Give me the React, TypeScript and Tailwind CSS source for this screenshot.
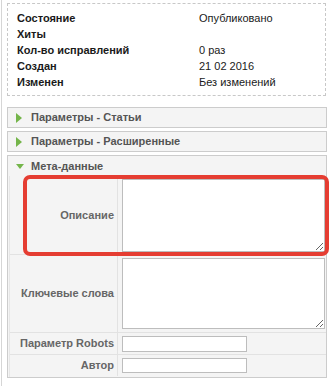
const info: [string, string][] = [
  ["Состояние", "Опубликовано"],
  ["Хиты", ""],
  ["Кол-во исправлений", "0 раз"],
  ["Создан", "21 02 2016"],
  ["Изменен", "Без изменений"],
]

function Closed({ title }: { title: string }) {
  return (
    <div className="flex h-[21px] w-[320px] items-center border border-[#cccccc] bg-[#f4f4f4] pl-[8px]">
      <span className="h-0 w-0 border-y-[5px] border-l-[6px] border-y-transparent border-l-[#74b54a]" />
      <span className="ml-[9px] text-[11px] font-bold leading-none text-[#555]">{title}</span>
    </div>
  )
}

function Row({ label, children, last }: { label: string; children: React.ReactNode; last?: boolean }) {
  return (
    <div className={"flex " + (last ? "" : "border-b border-[#e2e2e2]")}>
      <div className="flex w-[108px] shrink-0 items-center justify-end border-r border-[#e2e2e2] pr-[3px] text-[11px] font-bold text-[#666]">
        {label}
      </div>
      <div className="pb-[2px] pl-[4px] pt-[3px]">{children}</div>
    </div>
  )
}

export default function App() {
  return (
    <div className="relative min-h-[386px] bg-white pl-[1px] font-['Liberation_Sans',Arial,sans-serif]">
      <div className="min-h-[386px] border-l border-[#d6d6d6] pl-[5px] pt-[3px]">
        <div className="w-[319px] border border-dashed border-[#c8c8c8] pb-[5px] pl-[9px] pt-[6px]">
          {info.map(([k, v]) => (
            <div key={k} className="grid h-[16px] grid-cols-[182px_1fr] items-center text-[11px] text-[#1a1a1a]">
              <span className="font-bold">{k}</span>
              <span>{v}</span>
            </div>
          ))}
        </div>

        <div className="mt-[11px] flex flex-col gap-[3px]">
          <Closed title="Параметры - Статьи" />
          <Closed title="Параметры - Расширенные" />

          <div className="w-[320px] border border-[#cccccc] bg-[#f4f4f4]">
            <div className="flex h-[20px] items-center pl-[8px]">
              <span className="h-0 w-0 border-x-[4px] border-t-[5px] border-x-transparent border-t-[#74b54a]" />
              <span className="ml-[7px] text-[11px] font-bold leading-none text-[#555]">Мета-данные</span>
            </div>
            <div className="ml-[1px] border-l border-[#e6e6e6] pb-[1px]">
              <Row label="Описание">
                <textarea className="block h-[73px] w-[203px] border border-[#bdbdbd] bg-white" />
              </Row>
              <Row label="Ключевые слова">
                <textarea className="mb-[1px] block h-[71px] w-[203px] border border-[#bdbdbd] bg-white" />
              </Row>
              <Row label="Параметр Robots">
                <input className="block h-[16px] w-[125px] border border-[#bdbdbd] bg-white" />
              </Row>
              <Row label="Автор" last>
                <input className="mb-[1px] block h-[15px] w-[125px] border border-[#bdbdbd] bg-white" />
              </Row>
            </div>
          </div>
        </div>
      </div>

      <div className="pointer-events-none absolute left-[23px] top-[175px] h-[81px] w-[306px] rounded-[7px] border-[4px] border-[#e53d32]" />
    </div>
  )
}
